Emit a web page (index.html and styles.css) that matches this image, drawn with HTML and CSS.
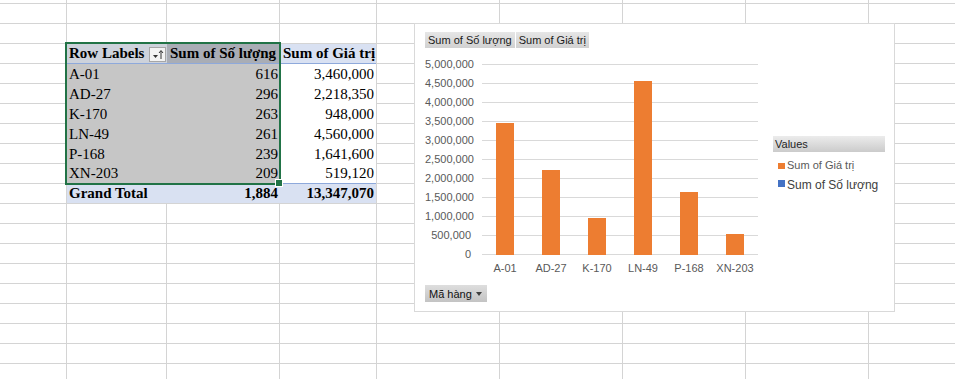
FILE: index.html
```html
<!DOCTYPE html>
<html lang="vi">
<head>
<meta charset="utf-8">
<title>Pivot</title>
<link rel="stylesheet" href="styles.css">
</head>
<body>
<div class="sheet">
  <div class="pivot">
    <div class="cell hdr hdr-active"><span class="lbl">Row Labels</span><span class="sortbtn"><svg width="13" height="11" viewBox="0 0 13 11"><path d="M2 6h5l-2.5 3z" fill="#333"/><path d="M10 10V2M8 4l2-2.5L12 4" stroke="#333" stroke-width="1" fill="none"/></svg></span></div>
    <div class="cell hdr hdr-sel">Sum of Số lượng</div>
    <div class="cell hdr hdr-plain">Sum of Giá trị</div>

    <div class="cell sel">A-01</div><div class="cell sel num">616</div><div class="cell num">3,460,000</div>
    <div class="cell sel">AD-27</div><div class="cell sel num">296</div><div class="cell num">2,218,350</div>
    <div class="cell sel">K-170</div><div class="cell sel num">263</div><div class="cell num">948,000</div>
    <div class="cell sel">LN-49</div><div class="cell sel num">261</div><div class="cell num">4,560,000</div>
    <div class="cell sel">P-168</div><div class="cell sel num">239</div><div class="cell num">1,641,600</div>
    <div class="cell sel">XN-203</div><div class="cell sel num">209</div><div class="cell num">519,120</div>

    <div class="cell total">Grand Total</div><div class="cell total num">1,884</div><div class="cell total num">13,347,070</div>
  </div>
  <div class="selection"><i class="handle"></i></div>

  <div class="chart">
    <div class="field-row">
      <span class="fbtn">Sum of Số lượng</span>
      <span class="fbtn">Sum of Giá trị</span>
    </div>
    <div class="chart-main">
      <div class="y-axis">
        <span>5,000,000</span><span>4,500,000</span><span>4,000,000</span><span>3,500,000</span><span>3,000,000</span><span>2,500,000</span><span>2,000,000</span><span>1,500,000</span><span>1,000,000</span><span>500,000</span><span>0</span>
      </div>
      <div class="plot">
        <div class="cat"><div class="bar" style="height:132px"></div></div>
        <div class="cat"><div class="bar" style="height:85px"></div></div>
        <div class="cat"><div class="bar" style="height:37px"></div></div>
        <div class="cat"><div class="bar" style="height:174px"></div></div>
        <div class="cat"><div class="bar" style="height:63px"></div></div>
        <div class="cat"><div class="bar" style="height:21px"></div></div>
      </div>
      <div class="x-axis">
        <span>A-01</span><span>AD-27</span><span>K-170</span><span>LN-49</span><span>P-168</span><span>XN-203</span>
      </div>
      <div class="legend">
        <div class="legend-head">Values</div>
        <div class="li li1"><i class="sw sw-orange"></i><span>Sum of Giá trị</span></div>
        <div class="li li2"><i class="sw sw-blue"></i><span>Sum of Số lượng</span></div>
      </div>
    </div>
    <div class="axis-btn"><span>Mã hàng</span><i class="caret"></i></div>
  </div>
</div>
</body>
</html>
```
FILE: styles.css
```css
html, body {
  margin: 0;
  padding: 0;
  background: #fff;
}

.sheet {
  position: relative;
  width: 955px;
  height: 379px;
  overflow: hidden;
  box-sizing: border-box;
  padding: 44px 0 0 67px;
  background-color: #fff;
  background-image:
    linear-gradient(to right,
      transparent 66px, #d4d4d4 66px 67px,
      transparent 67px 166px, #d4d4d4 166px 167px,
      transparent 167px 279px, #d4d4d4 279px 280px,
      transparent 280px 376px, #d4d4d4 376px 377px,
      transparent 377px 499px, #d4d4d4 499px 500px,
      transparent 500px 622px, #d4d4d4 622px 623px,
      transparent 623px 745px, #d4d4d4 745px 746px,
      transparent 746px 868px, #d4d4d4 868px 869px,
      transparent 869px),
    linear-gradient(to bottom, #d4d4d4 0 1px, transparent 1px);
  background-size: 100% 100%, 100% 20px;
  background-position: 0 0, 0 3px;
  background-repeat: no-repeat, repeat;
}

/* Pivot table */
.pivot {
  display: grid;
  grid-template-columns: 100px 113px 96px;
  grid-template-rows: 20px repeat(5, 20px) 19px 20px;
  width: 309px;
  font-family: "Liberation Serif", "Times New Roman", serif;
  font-size: 15px;
  color: #000;
}

.cell {
  display: flex;
  align-items: center;
  padding: 0 2px;
  background: #fff;
  white-space: nowrap;
  overflow: hidden;
}

.num {
  justify-content: flex-end;
  padding-right: 2px;
}

.hdr {
  font-weight: bold;
  padding-left: 2px;
  padding-bottom: 1px;
  box-shadow: inset 0 -1px 0 #8ea9db;
}

.hdr-active {
  background: #cdd2db;
  justify-content: space-between;
  padding-right: 0;
}

.hdr-sel {
  background: #a9adb5;
  padding-left: 3px;
}

.hdr-plain {
  background: #d9e1f2;
  padding-left: 3px;
}

.sortbtn {
  display: flex;
  align-items: center;
  justify-content: center;
  width: 15px;
  height: 13px;
  margin-right: 1px;
  margin-top: 1px;
  background: #f3f3f3;
  border: 1px solid #a6a6a6;
}

.sel {
  background: #c6c6c6;
}

.total {
  background: #d9e1f2;
  font-weight: bold;
  padding-top: 1px;
  box-shadow: inset 0 1px 0 #8ea9db;
}

.selection {
  position: absolute;
  left: 65px;
  top: 42px;
  width: 216px;
  height: 143px;
  box-sizing: border-box;
  border: 2px solid #217346;
  pointer-events: none;
}

.handle {
  position: absolute;
  right: -3px;
  bottom: -3px;
  width: 6px;
  height: 6px;
  background: #217346;
  box-shadow: 0 0 0 1px #fff;
}

/* Chart */
.chart {
  position: absolute;
  left: 414px;
  top: 23px;
  width: 481px;
  height: 289px;
  box-sizing: border-box;
  border: 1px solid #d9d9d9;
  background: #fff;
  padding: 8px 0 0 10px;
  font-family: "Liberation Sans", Arial, sans-serif;
  font-size: 11px;
}

.field-row {
  display: flex;
  gap: 1px;
  height: 16px;
}

.fbtn {
  display: block;
  height: 16px;
  line-height: 16px;
  padding: 0 3px;
  color: #1a1a1a;
  background: linear-gradient(#e6e6e6, #d1d1d1);
  white-space: nowrap;
}

.chart-main {
  display: grid;
  grid-template-columns: 46px 11px 276px 15px 112px;
  grid-template-rows: 209px auto;
  margin-top: 7px;
}

.y-axis {
  grid-column: 1;
  grid-row: 1;
  display: flex;
  flex-direction: column;
  color: #595959;
  text-align: right;
}

.y-axis span {
  display: block;
  height: 19px;
  line-height: 19px;
  white-space: nowrap;
}

.plot {
  grid-column: 3;
  grid-row: 1;
  align-self: start;
  margin-top: 9px;
  height: 191px;
  display: flex;
  align-items: flex-end;
  background-image: linear-gradient(to bottom, #d9d9d9 0 1px, transparent 1px);
  background-size: 100% 19px;
}

.cat {
  width: 46px;
  display: flex;
  justify-content: center;
}

.bar {
  width: 18px;
  background: #ed7d31;
}

.x-axis {
  grid-column: 3;
  grid-row: 2;
  display: flex;
  margin-top: -2px;
  color: #595959;
}

.x-axis span {
  width: 46px;
  text-align: center;
  line-height: 13px;
  white-space: nowrap;
}

.legend {
  grid-column: 5;
  grid-row: 1 / span 2;
  align-self: start;
  margin-top: 81px;
}

.legend-head {
  height: 16px;
  line-height: 16px;
  padding-left: 2px;
  color: #1f1f1f;
  background: linear-gradient(#ececec, #cbcbcb);
}

.li {
  display: flex;
  align-items: center;
  gap: 2px;
  padding-left: 5px;
  white-space: nowrap;
}

.li1 {
  margin-top: 7px;
  line-height: 13px;
  color: #595959;
}

.li2 {
  margin-top: 5px;
  line-height: 17px;
  align-items: flex-start;
  color: #404040;
  font-size: 12px;
}

.sw {
  display: block;
  width: 7px;
}

.sw-orange {
  height: 6px;
  background: #ed7d31;
}

.sw-blue {
  height: 7px;
  margin-top: 3px;
  background: #4472c4;
}

.axis-btn {
  display: flex;
  align-items: center;
  justify-content: space-between;
  box-sizing: border-box;
  width: 62px;
  height: 17px;
  margin-top: 10px;
  padding: 0 5px 0 4px;
  font-size: 11px;
  color: #111;
  background: linear-gradient(#dedede, #c3c3c3);
}

.caret {
  display: block;
  width: 0;
  height: 0;
  border-left: 3px solid transparent;
  border-right: 3px solid transparent;
  border-top: 4px solid #404040;
}
```
